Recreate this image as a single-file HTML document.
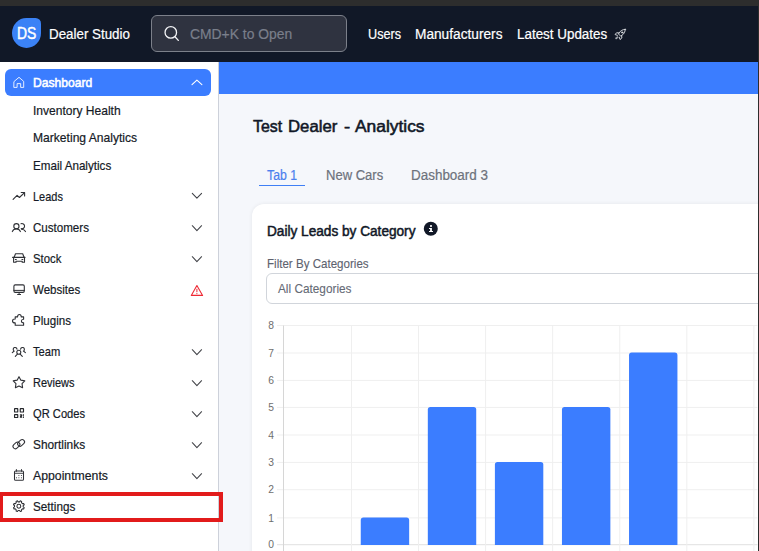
<!DOCTYPE html>
<html lang="en">
<head>
<meta charset="utf-8">
<title>Dealer Studio - Analytics</title>
<style>
html,body{margin:0;padding:0}
body{width:759px;height:551px;overflow:hidden;position:relative;background:#f5f7fb;font-family:"Liberation Sans", sans-serif;}
.a{position:absolute}
.t{position:absolute;margin:0;padding:0;white-space:nowrap;line-height:20px;transform-origin:0 50%;font-family:"Liberation Sans", sans-serif;text-decoration:none}
h1{margin:0;font-size:0;line-height:0}
.ic{position:absolute;overflow:visible}
#top{left:0;top:0;width:759px;height:6px;background:#2d2d2d}
#hdr{left:0;top:6px;width:759px;height:56px;background:#111827}
#right{left:758px;top:0;width:1px;height:551px;background:#2d2d2d}
#logo{left:12.2px;top:17.8px;width:29.1px;height:30.4px;background:#3b82f6;border-radius:14.6px 5.5px 14.6px 14.6px / 15.2px 5.5px 15.2px 15.2px}
#search{left:151px;top:15px;width:196px;height:37px;box-sizing:border-box;border:1px solid #7c808a;border-radius:6px;background:#2f3340}
#side{left:0;top:62px;width:218px;height:489px;background:#fff;border-right:1px solid #cdd1da}
#bar{left:219px;top:62px;width:539px;height:32px;background:#3b7dff}
#pill{left:5px;top:69px;width:206px;height:27px;background:#3b7dff;border-radius:6px}
#tabline{left:259px;top:184.6px;width:46px;height:1.5px;background:#3f7ff5}
#card{left:252px;top:204px;width:520px;height:360px;background:#fff;border-radius:12px;box-shadow:0 0 4px rgba(0,0,0,.07)}
#sel{left:266px;top:273px;width:520px;height:31px;box-sizing:border-box;border:1px solid #d1d5db;border-radius:6px;background:#fff}
#red{left:-1px;top:492px;width:224px;height:30px;box-sizing:border-box;border:4px solid #e21b1b}
</style>
</head>
<body>
<main>
<div class="a" id="bar"></div>
<h1><span class="t" style="left:252.98px;top:115.90px;font-size:16.5px;font-weight:400;color:#111827;-webkit-text-stroke:0.55px #111827;transform:scaleX(0.9636)">Test</span> <span class="t" style="left:288.31px;top:115.90px;font-size:16.5px;font-weight:400;color:#111827;-webkit-text-stroke:0.55px #111827;transform:scaleX(1.0136)">Dealer</span> <span class="t" style="left:343.56px;top:115.90px;font-size:16.5px;font-weight:400;color:#111827;-webkit-text-stroke:0.55px #111827;transform:scaleX(1.1224)">-</span> <span class="t" style="left:354.60px;top:115.90px;font-size:16.5px;font-weight:400;color:#111827;-webkit-text-stroke:0.55px #111827;transform:scaleX(1.0534)">Analytics</span></h1>
<div class="a" id="tabline"></div>
<a class="t" style="left:266.58px;top:165.90px;font-size:13.8px;font-weight:400;color:#4a80ee;-webkit-text-stroke:0.2px #4a80ee;transform:scaleX(0.8884)">Tab 1</a>
<a class="t" style="left:325.58px;top:165.90px;font-size:13.8px;font-weight:400;color:#6d727c;-webkit-text-stroke:0.2px #6d727c;transform:scaleX(0.9449)">New Cars</a>
<a class="t" style="left:410.56px;top:165.90px;font-size:13.8px;font-weight:400;color:#6d727c;-webkit-text-stroke:0.2px #6d727c;transform:scaleX(0.9745)">Dashboard 3</a>
<section>
<div class="a" id="card"></div>
<div class="a" id="sel"></div>
<svg class="ic" style="left:0;top:0" width="759" height="551" viewBox="0 0 759 551">
<line x1="277" y1="544.70" x2="757.5" y2="544.70" stroke="#e0e0e0" stroke-width="1"/>
<line x1="277" y1="517.90" x2="757.5" y2="517.90" stroke="#efefef" stroke-width="1"/>
<line x1="277" y1="489.70" x2="757.5" y2="489.70" stroke="#efefef" stroke-width="1"/>
<line x1="277" y1="462.40" x2="757.5" y2="462.40" stroke="#efefef" stroke-width="1"/>
<line x1="277" y1="435.00" x2="757.5" y2="435.00" stroke="#efefef" stroke-width="1"/>
<line x1="277" y1="407.40" x2="757.5" y2="407.40" stroke="#efefef" stroke-width="1"/>
<line x1="277" y1="380.40" x2="757.5" y2="380.40" stroke="#efefef" stroke-width="1"/>
<line x1="277" y1="353.00" x2="757.5" y2="353.00" stroke="#efefef" stroke-width="1"/>
<line x1="277" y1="325.50" x2="757.5" y2="325.50" stroke="#efefef" stroke-width="1"/>
<line x1="351.47" y1="325.5" x2="351.47" y2="551" stroke="#efefef" stroke-width="1"/>
<line x1="418.54" y1="325.5" x2="418.54" y2="551" stroke="#efefef" stroke-width="1"/>
<line x1="485.61" y1="325.5" x2="485.61" y2="551" stroke="#efefef" stroke-width="1"/>
<line x1="552.68" y1="325.5" x2="552.68" y2="551" stroke="#efefef" stroke-width="1"/>
<line x1="619.75" y1="325.5" x2="619.75" y2="551" stroke="#efefef" stroke-width="1"/>
<line x1="686.82" y1="325.5" x2="686.82" y2="551" stroke="#efefef" stroke-width="1"/>
<line x1="753.89" y1="325.5" x2="753.89" y2="551" stroke="#efefef" stroke-width="1"/>
<line x1="283.5" y1="325.5" x2="283.5" y2="551" stroke="#d6d6d6" stroke-width="1"/>
<path d="M360.76 544.9000000000001 V520.10 Q360.76 517.50 363.36 517.50 H406.56 Q409.16 517.50 409.16 520.10 V544.9000000000001 Z" fill="#3b7dff"/>
<path d="M427.82 544.9000000000001 V409.60 Q427.82 407.00 430.43 407.00 H473.62 Q476.22 407.00 476.22 409.60 V544.9000000000001 Z" fill="#3b7dff"/>
<path d="M494.90 544.9000000000001 V464.60 Q494.90 462.00 497.50 462.00 H540.70 Q543.30 462.00 543.30 464.60 V544.9000000000001 Z" fill="#3b7dff"/>
<path d="M561.96 544.9000000000001 V409.60 Q561.96 407.00 564.56 407.00 H607.76 Q610.37 407.00 610.37 409.60 V544.9000000000001 Z" fill="#3b7dff"/>
<path d="M629.03 544.9000000000001 V355.20 Q629.03 352.60 631.63 352.60 H674.84 Q677.44 352.60 677.44 355.20 V544.9000000000001 Z" fill="#3b7dff"/>
<text x="273.9" y="548.30" text-anchor="end" font-family='"Liberation Sans", sans-serif' font-size="10.3" fill="#6e6e6e">0</text>
<text x="273.9" y="521.50" text-anchor="end" font-family='"Liberation Sans", sans-serif' font-size="10.3" fill="#6e6e6e">1</text>
<text x="273.9" y="493.30" text-anchor="end" font-family='"Liberation Sans", sans-serif' font-size="10.3" fill="#6e6e6e">2</text>
<text x="273.9" y="466.00" text-anchor="end" font-family='"Liberation Sans", sans-serif' font-size="10.3" fill="#6e6e6e">3</text>
<text x="273.9" y="438.60" text-anchor="end" font-family='"Liberation Sans", sans-serif' font-size="10.3" fill="#6e6e6e">4</text>
<text x="273.9" y="411.00" text-anchor="end" font-family='"Liberation Sans", sans-serif' font-size="10.3" fill="#6e6e6e">5</text>
<text x="273.9" y="384.00" text-anchor="end" font-family='"Liberation Sans", sans-serif' font-size="10.3" fill="#6e6e6e">6</text>
<text x="273.9" y="356.60" text-anchor="end" font-family='"Liberation Sans", sans-serif' font-size="10.3" fill="#6e6e6e">7</text>
<text x="273.9" y="329.10" text-anchor="end" font-family='"Liberation Sans", sans-serif' font-size="10.3" fill="#6e6e6e">8</text>
</svg>
<svg class="ic" style="left:0;top:0" width="759" height="551" viewBox="0 0 759 551">
<circle cx="430.8" cy="228.75" r="7" fill="#111827"/>
<rect x="430.1" y="225.1" width="1.8" height="1.8" fill="#fff"/>
<path d="M429.0 227.9 H431.9 V230.9 H433.0 V232.0 H429.0 V230.9 H430.1 V229.0 H429.0 Z" fill="#fff"/>
</svg>
<h2 class="t" style="left:266.50px;top:221.90px;font-size:13.8px;font-weight:400;color:#111827;-webkit-text-stroke:0.5px #111827;transform:scaleX(0.9878)">Daily Leads by Category</h2>
<label class="t" style="left:266.51px;top:253.53px;font-size:12.1px;font-weight:400;color:#5d626e;-webkit-text-stroke:0.1px #5d626e;transform:scaleX(0.9572)">Filter By Categories</label>
<span class="t" style="left:277.55px;top:278.53px;font-size:12.1px;font-weight:400;color:#656a75;-webkit-text-stroke:0.1px #656a75;transform:scaleX(0.9761)">All Categories</span>
</section>
</main>
<nav>
<div class="a" id="side"></div>
<div class="a" id="pill"></div>
<svg class="ic" style="left:0;top:0" width="759" height="551" viewBox="0 0 759 551">
<path d="M14.2 81.4 L19 77.3 L23.7 81.4 V87.4 H20.65 V83.6 H17.1 V87.4 H14.2 Z" fill="none" stroke="#ffffff" stroke-width="0.95" stroke-linecap="round" stroke-linejoin="round" opacity="0.9"/>
<path d="M192 84.7 L196.9 80.15 L201.9 84.7" fill="none" stroke="#ffffff" stroke-width="1.1" stroke-linecap="round" stroke-linejoin="round" />
<path d="M13.1 199.4 L17.1 195.4 L19.4 197.5 L24.3 192.8" fill="none" stroke="#2f3136" stroke-width="1.1" stroke-linecap="round" stroke-linejoin="round" />
<path d="M21.2 192.5 H24.6 V195.9" fill="none" stroke="#2f3136" stroke-width="1.1" stroke-linecap="round" stroke-linejoin="round" />
<circle cx="16.4" cy="226.2" r="2.6" fill="none" stroke="#2f3136" stroke-width="1.1"/>
<path d="M12.3 231.6 A4.4 4.4 0 0 1 20.4 231.6" fill="none" stroke="#2f3136" stroke-width="1.1" stroke-linecap="round" stroke-linejoin="round" />
<path d="M21.0 223.75 A2.6 2.6 0 1 1 21.2 228.65" fill="none" stroke="#2f3136" stroke-width="1.1" stroke-linecap="round" stroke-linejoin="round" />
<path d="M21.6 229.2 Q24.4 229.4 25.5 231.6" fill="none" stroke="#2f3136" stroke-width="1.1" stroke-linecap="round" stroke-linejoin="round" />
<path d="M14.2 257.3 L15.5 253.7 H22.7 L24 257.3" fill="none" stroke="#2f3136" stroke-width="1.1" stroke-linecap="round" stroke-linejoin="round" />
<path d="M12.6 257.3 H25" fill="none" stroke="#2f3136" stroke-width="1.2" stroke-linecap="round" stroke-linejoin="round" />
<path d="M13.6 257.3 V262.3 H16 V261.2 H22.2 V262.3 H24.5 V257.3" fill="none" stroke="#2f3136" stroke-width="1.1" stroke-linecap="round" stroke-linejoin="round" />
<path d="M15.3 259.5 H16.3 M21.9 259.5 H22.9" fill="none" stroke="#2f3136" stroke-width="1.0" stroke-linecap="round" stroke-linejoin="round" />
<rect x="13.9" y="284.9" width="10.4" height="7.5" rx="1.3" fill="none" stroke="#2f3136" stroke-width="1.1"/>
<path d="M13.9 290.4 H24.3" fill="none" stroke="#2f3136" stroke-width="1.0" stroke-linecap="round" stroke-linejoin="round" />
<path d="M19.1 292.4 V294.3 M17.6 294.5 H20.6" fill="none" stroke="#2f3136" stroke-width="1.0" stroke-linecap="round" stroke-linejoin="round" />
<path d="M15.2 325.2 H23.6 V322.7 Q21.4 322.6 21.4 320.9 Q21.4 319.3 23.6 319.2 V316.9 H21.3 Q21.2 314.5 19.4 314.5 Q17.6 314.5 17.5 316.9 H15.2 V319 Q12.5 319 12.5 320.9 Q12.5 322.9 15.2 322.9 Z" fill="none" stroke="#2f3136" stroke-width="1.1" stroke-linecap="round" stroke-linejoin="round" />
<circle cx="18.8" cy="352.2" r="2.0" fill="none" stroke="#2f3136" stroke-width="1.1"/>
<path d="M17.2 354.4 L15.3 356.4 M20.4 354.4 L22.3 356.4" fill="none" stroke="#2f3136" stroke-width="1.1" stroke-linecap="round" stroke-linejoin="round" />
<path d="M13.5 350.4 A1.9 1.9 0 1 1 17.0 349.2" fill="none" stroke="#2f3136" stroke-width="1.1" stroke-linecap="round" stroke-linejoin="round" />
<path d="M14.2 351.0 L12.3 352.6" fill="none" stroke="#2f3136" stroke-width="1.1" stroke-linecap="round" stroke-linejoin="round" />
<path d="M24.1 350.4 A1.9 1.9 0 1 0 20.6 349.2" fill="none" stroke="#2f3136" stroke-width="1.1" stroke-linecap="round" stroke-linejoin="round" />
<path d="M23.4 351.0 L25.4 352.6" fill="none" stroke="#2f3136" stroke-width="1.1" stroke-linecap="round" stroke-linejoin="round" />
<path d="M19.00 376.65 L20.88 380.16 L24.80 380.86 L22.04 383.74 L22.59 387.69 L19.00 385.95 L15.41 387.69 L15.96 383.74 L13.20 380.86 L17.12 380.16 Z" fill="none" stroke="#2f3136" stroke-width="1.1" stroke-linecap="round" stroke-linejoin="round" />
<rect x="14.55" y="408.6" width="3.2" height="3.4" rx="0.3" fill="none" stroke="#25272b" stroke-width="1.15"/>
<rect x="20.25" y="408.6" width="3.25" height="3.4" rx="0.3" fill="none" stroke="#25272b" stroke-width="1.15"/>
<rect x="14.55" y="414.6" width="3.2" height="2.9" rx="0.3" fill="none" stroke="#25272b" stroke-width="1.15"/>
<path d="M20.3 414.7 H21.6 V416.1 H20.3 M23.3 414.6 V415.4 M20.3 417.3 H21.7 M23.4 416.7 V417.4" fill="none" stroke="#25272b" stroke-width="1.05" stroke-linecap="round" stroke-linejoin="round" />
<rect x="12.65" y="443.10" width="7.6" height="4.7" rx="2.35" fill="none" stroke="#2f3136" stroke-width="1.05" transform="rotate(-42 16.45 445.45)"/>
<rect x="17.30" y="440.60" width="7.6" height="4.7" rx="2.35" fill="none" stroke="#2f3136" stroke-width="1.05" transform="rotate(-42 21.1 442.95)"/>
<rect x="14.5" y="470.9" width="9" height="9.4" rx="1.1" fill="none" stroke="#2f3136" stroke-width="1.05"/>
<path d="M14.5 473.3 H23.5" fill="none" stroke="#2f3136" stroke-width="0.9" stroke-linecap="round" stroke-linejoin="round" />
<path d="M16.4 469.5 V471.4 M21.5 469.5 V471.4" fill="none" stroke="#2f3136" stroke-width="0.9" stroke-linecap="round" stroke-linejoin="round" />
<circle cx="18.9" cy="475.5" r="0.55" fill="#2f3136"/>
<circle cx="21.4" cy="475.5" r="0.55" fill="#2f3136"/>
<circle cx="16.5" cy="477.7" r="0.55" fill="#2f3136"/>
<circle cx="18.9" cy="477.7" r="0.55" fill="#2f3136"/>
<circle cx="21.4" cy="477.7" r="0.55" fill="#2f3136"/>
<path d="M19.54 501.85 L20.27 500.84 L21.64 501.40 L21.44 502.64 L22.41 503.61 L23.65 503.41 L24.21 504.78 L23.20 505.51 L23.20 506.89 L24.21 507.62 L23.65 508.99 L22.41 508.79 L21.44 509.76 L21.64 511.00 L20.27 511.56 L19.54 510.55 L18.16 510.55 L17.43 511.56 L16.06 511.00 L16.26 509.76 L15.29 508.79 L14.05 508.99 L13.49 507.62 L14.50 506.89 L14.50 505.51 L13.49 504.78 L14.05 503.41 L15.29 503.61 L16.26 502.64 L16.06 501.40 L17.43 500.84 L18.16 501.85 Z" fill="none" stroke="#2f3136" stroke-width="1.05" stroke-linecap="round" stroke-linejoin="round" />
<circle cx="18.85" cy="506.2" r="1.95" fill="none" stroke="#2f3136" stroke-width="1.05"/>
<path d="M192.3 193.30 L196.9 198.20 L201.6 193.30" fill="none" stroke="#404247" stroke-width="1.05" stroke-linecap="round" stroke-linejoin="round" />
<path d="M192.3 225.70 L196.9 230.60 L201.6 225.70" fill="none" stroke="#404247" stroke-width="1.05" stroke-linecap="round" stroke-linejoin="round" />
<path d="M192.3 256.70 L196.9 261.60 L201.6 256.70" fill="none" stroke="#404247" stroke-width="1.05" stroke-linecap="round" stroke-linejoin="round" />
<path d="M192.3 349.70 L196.9 354.60 L201.6 349.70" fill="none" stroke="#404247" stroke-width="1.05" stroke-linecap="round" stroke-linejoin="round" />
<path d="M192.3 380.70 L196.9 385.60 L201.6 380.70" fill="none" stroke="#404247" stroke-width="1.05" stroke-linecap="round" stroke-linejoin="round" />
<path d="M192.3 411.70 L196.9 416.60 L201.6 411.70" fill="none" stroke="#404247" stroke-width="1.05" stroke-linecap="round" stroke-linejoin="round" />
<path d="M192.3 442.70 L196.9 447.60 L201.6 442.70" fill="none" stroke="#404247" stroke-width="1.05" stroke-linecap="round" stroke-linejoin="round" />
<path d="M192.3 473.70 L196.9 478.60 L201.6 473.70" fill="none" stroke="#404247" stroke-width="1.05" stroke-linecap="round" stroke-linejoin="round" />
<path d="M196.9 285.5 L202.6 295.4 H191.3 Z" fill="none" stroke="#ee2a35" stroke-width="1.1" stroke-linecap="round" stroke-linejoin="round" />
<path d="M196.9 289.2 V291.8" fill="none" stroke="#ee2a35" stroke-width="1.0" stroke-linecap="round" stroke-linejoin="round" />
<circle cx="196.9" cy="293.6" r="0.6" fill="#ee2a35"/>
</svg>
<a class="t" style="left:32.62px;top:73.31px;font-size:12.7px;font-weight:400;color:#ffffff;-webkit-text-stroke:0.55px #ffffff;transform:scaleX(0.9533)">Dashboard</a>
<a class="t" style="left:32.59px;top:101.31px;font-size:12.7px;font-weight:400;color:#151a26;-webkit-text-stroke:0.2px #151a26;transform:scaleX(0.9488)">Inventory Health</a>
<a class="t" style="left:32.55px;top:128.31px;font-size:12.7px;font-weight:400;color:#151a26;-webkit-text-stroke:0.2px #151a26;transform:scaleX(0.9528)">Marketing Analytics</a>
<a class="t" style="left:32.62px;top:156.31px;font-size:12.7px;font-weight:400;color:#151a26;-webkit-text-stroke:0.2px #151a26;transform:scaleX(0.9167)">Email Analytics</a>
<a class="t" style="left:32.55px;top:187.31px;font-size:12.7px;font-weight:400;color:#151a26;-webkit-text-stroke:0.2px #151a26;transform:scaleX(0.8642)">Leads</a>
<a class="t" style="left:32.58px;top:218.31px;font-size:12.7px;font-weight:400;color:#151a26;-webkit-text-stroke:0.2px #151a26;transform:scaleX(0.9120)">Customers</a>
<a class="t" style="left:32.52px;top:249.31px;font-size:12.7px;font-weight:400;color:#151a26;-webkit-text-stroke:0.2px #151a26;transform:scaleX(0.8925)">Stock</a>
<a class="t" style="left:32.70px;top:280.31px;font-size:12.7px;font-weight:400;color:#151a26;-webkit-text-stroke:0.2px #151a26;transform:scaleX(0.9087)">Websites</a>
<a class="t" style="left:32.62px;top:311.31px;font-size:12.7px;font-weight:400;color:#151a26;-webkit-text-stroke:0.2px #151a26;transform:scaleX(0.9131)">Plugins</a>
<a class="t" style="left:32.51px;top:342.31px;font-size:12.7px;font-weight:400;color:#151a26;-webkit-text-stroke:0.2px #151a26;transform:scaleX(0.8793)">Team</a>
<a class="t" style="left:32.55px;top:373.31px;font-size:12.7px;font-weight:400;color:#151a26;-webkit-text-stroke:0.2px #151a26;transform:scaleX(0.8656)">Reviews</a>
<a class="t" style="left:32.58px;top:404.31px;font-size:12.7px;font-weight:400;color:#151a26;-webkit-text-stroke:0.2px #151a26;transform:scaleX(0.8792)">QR Codes</a>
<a class="t" style="left:32.51px;top:435.31px;font-size:12.7px;font-weight:400;color:#151a26;-webkit-text-stroke:0.2px #151a26;transform:scaleX(0.9345)">Shortlinks</a>
<a class="t" style="left:32.71px;top:466.31px;font-size:12.7px;font-weight:400;color:#151a26;-webkit-text-stroke:0.2px #151a26;transform:scaleX(0.9663)">Appointments</a>
<a class="t" style="left:32.52px;top:497.31px;font-size:12.7px;font-weight:400;color:#151a26;-webkit-text-stroke:0.2px #151a26;transform:scaleX(0.9224)">Settings</a>
<div class="a" id="red"></div>
</nav>
<header>
<div class="a" id="top"></div>
<div class="a" id="hdr"></div>
<div class="a" id="logo"></div>
<div class="a" id="search"></div>
<svg class="ic" style="left:0;top:0" width="759" height="551" viewBox="0 0 759 551">
<circle cx="170.8" cy="32.4" r="5.75" fill="none" stroke="#f3f4f6" stroke-width="1.3"/>
<path d="M175 36.7 L178.3 40.4" fill="none" stroke="#f3f4f6" stroke-width="1.3" stroke-linecap="round" stroke-linejoin="round" />
</svg>
<svg class="ic" style="left:614.3px;top:27.8px" width="12.6" height="12.6" viewBox="0 0 24 24" fill="none" stroke="#e5e7eb" stroke-width="1.7" stroke-linecap="round" stroke-linejoin="round"><path d="M21.5 2.5c-5 .3-9 2.5-12 7l-1 1.8 4.2 4.2 1.8-1c4.5-3 6.7-7 7-12z"/><path d="M9.5 9.5 5 9l-3 3.5 4.5 1.5M14.5 14.5l.5 4.5-3.5 3-1.5-4.5"/><path d="M6 16.5c-1.5.5-2.5 2.5-2.5 4 1.5 0 3.5-1 4-2.5"/><circle cx="15.5" cy="8.5" r="1.3"/></svg>
<span class="t" style="left:16.58px;top:23.01px;font-size:16.2px;font-weight:400;color:#ffffff;-webkit-text-stroke:0.5px #ffffff;transform:scaleX(0.8574)">DS</span>
<span class="t" style="left:48.59px;top:23.83px;font-size:14.0px;font-weight:400;color:#ffffff;-webkit-text-stroke:0.2px #ffffff;transform:scaleX(0.9542)">Dealer Studio</span>
<span class="t" style="left:189.56px;top:23.61px;font-size:14.6px;font-weight:400;color:#7a7f8b;-webkit-text-stroke:0.2px #7a7f8b;transform:scaleX(0.9508)">CMD+K to Open</span>
<a class="t" style="left:367.54px;top:23.83px;font-size:14.0px;font-weight:400;color:#ffffff;-webkit-text-stroke:0.2px #ffffff;transform:scaleX(0.9052)">Users</a>
<a class="t" style="left:414.60px;top:23.83px;font-size:14.0px;font-weight:400;color:#ffffff;-webkit-text-stroke:0.2px #ffffff;transform:scaleX(0.9776)">Manufacturers</a>
<a class="t" style="left:516.59px;top:23.83px;font-size:14.0px;font-weight:400;color:#ffffff;-webkit-text-stroke:0.2px #ffffff;transform:scaleX(0.9579)">Latest Updates</a>
</header>
<div class="a" id="right"></div>
</body>
</html>
